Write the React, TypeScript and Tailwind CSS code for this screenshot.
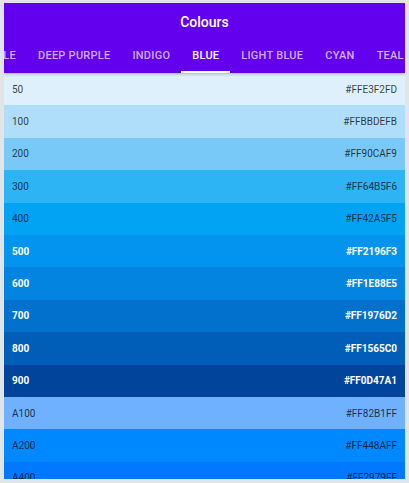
const tabs = ["DEEP PURPLE", "INDIGO", "BLUE", "LIGHT BLUE", "CYAN", "TEAL", "GREEN"];

const shades = [
  { name: "50", hex: "#FFE3F2FD", bg: "bg-[#ddf0fc]", dark: false },
  { name: "100", hex: "#FFBBDEFB", bg: "bg-[#aedefa]", dark: false },
  { name: "200", hex: "#FF90CAF9", bg: "bg-[#79c9f8]", dark: false },
  { name: "300", hex: "#FF64B5F6", bg: "bg-[#2db4f5]", dark: false },
  { name: "400", hex: "#FF42A5F5", bg: "bg-[#03a3f3]", dark: false },
  { name: "500", hex: "#FF2196F3", bg: "bg-[#0294ee]", dark: true },
  { name: "600", hex: "#FF1E88E5", bg: "bg-[#0284e0]", dark: true },
  { name: "700", hex: "#FF1976D2", bg: "bg-[#0171cd]", dark: true },
  { name: "800", hex: "#FF1565C0", bg: "bg-[#015eb8]", dark: true },
  { name: "900", hex: "#FF0D47A1", bg: "bg-[#00459b]", dark: true },
  { name: "A100", hex: "#FF82B1FF", bg: "bg-[#70b1ff]", dark: false },
  { name: "A200", hex: "#FF448AFF", bg: "bg-[#0089ff]", dark: false },
  { name: "A400", hex: "#FF2979FF", bg: "bg-[#0078ff]", dark: false },
  { name: "A700", hex: "#FF2962FF", bg: "bg-[#0062ff]", dark: true },
];

function Tab({ label, active }: { label: string; active?: boolean }) {
  return (
    <div
      className={`flex shrink-0 items-center px-[11px] border-b-2 whitespace-nowrap ${
        active ? "border-white text-white" : "border-transparent text-white/70"
      }`}
    >
      {label}
    </div>
  );
}

export default function App() {
  return (
    <div className="w-[409px] h-[483px] bg-[#e1e5e8] pt-[3px] px-[4px] pb-[4px] font-['Roboto',sans-serif]">
      <div className="flex h-full flex-col overflow-hidden bg-white">
        {/* App bar */}
        <div className="shrink-0 bg-[#6300ee] shadow-[0_1px_3px_rgba(0,0,0,0.25)] z-10">
          <div className="flex h-[39px] items-center justify-center text-[14px] font-medium text-white">
            Colours
          </div>
          <div className="flex h-[31px] overflow-hidden text-[11px] font-medium tracking-[0.25px]">
            {/* previous tab, mostly scrolled away */}
            <div className="flex w-[23px] shrink-0 justify-end overflow-hidden">
              <Tab label="PURPLE" />
            </div>
            {tabs.map((t) => (
              <Tab key={t} label={t} active={t === "BLUE"} />
            ))}
          </div>
        </div>

        {/* Swatches */}
        <div className="flex flex-col">
          {shades.map((s) => (
            <div
              key={s.name}
              className={`flex h-[32.4px] shrink-0 items-center justify-between px-2 text-[10px] ${s.bg} ${
                s.dark ? "font-bold text-white" : "text-black/75"
              }`}
            >
              <span>{s.name}</span>
              <span>{s.hex}</span>
            </div>
          ))}
        </div>
      </div>
    </div>
  );
}
